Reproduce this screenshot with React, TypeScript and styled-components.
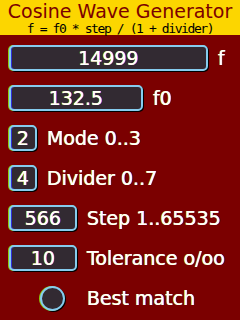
import styled, { createGlobalStyle } from "styled-components";

const GlobalStyle = createGlobalStyle`
    html, body {
        margin: 0;
        padding: 0;
        background: #7b0000;
    }
`;

const Screen = styled.div`
    width: 240px;
    height: 320px;
    background: #7b0000;
    font-family: "DejaVu Sans", sans-serif;
    overflow: hidden;
`;

const Header = styled.div`
    height: 35px;
    background: #fcd600;
    padding-top: 2px;
    box-sizing: border-box;
    display: flex;
    flex-direction: column;
    align-items: center;
    gap: 1px;
`;

const Title = styled.div`
    font-size: 19px;
    line-height: 19px;
    color: #7b0000;
    white-space: nowrap;
`;

const Formula = styled.div`
    font-family: "DejaVu Sans Mono", monospace;
    font-size: 13px;
    line-height: 13px;
    letter-spacing: -1.4px;
    color: #000;
    white-space: nowrap;
`;

const Body = styled.div`
    display: flex;
    flex-direction: column;
    gap: 14px;
    padding: 10px 0 0 9px;
`;

const Row = styled.div<{ $gap?: number }>`
    display: flex;
    align-items: center;
    gap: ${p => p.$gap ?? 10}px;
    height: 26px;
`;

const Field = styled.div<{ $w: number }>`
    width: ${p => p.$w}px;
    height: 26px;
    box-sizing: border-box;
    border: 2px solid #86ccee;
    border-radius: 5px;
    background: #322a32;
    box-shadow: -1px 0 0 #8ccc10, 1px 1px 0 #000, inset 1px 0 0 #3030d8;
    display: flex;
    align-items: center;
    justify-content: center;
    font-size: 19px;
    color: #fff;
    text-shadow: -0.6px 0 0 #ffe600, 0.6px 0 0 #2828ff;
`;

const Label = styled.span`
    font-size: 19px;
    color: #fff;
    white-space: nowrap;
    text-shadow: -0.6px 0 0 #ffe600, 0.6px 0 0 #2828ff;
`;

const Led = styled.div`
    width: 25px;
    height: 25px;
    margin-left: 31px;
    box-sizing: border-box;
    border-radius: 50%;
    border: 2px solid #86ccee;
    background: #322a32;
    box-shadow: -1px 0 0 #8ccc10, 1px 1px 0 #000;
`;

const fields = [
    { value: "14999", width: 199, label: "f" },
    { value: "132.5", width: 134, label: "f0" },
    { value: "2", width: 28, label: "Mode 0..3" },
    { value: "4", width: 28, label: "Divider 0..7" },
    { value: "566", width: 68, label: "Step 1..65535" },
    { value: "10", width: 68, label: "Tolerance o/oo" },
];

export default function App() {
    return (
        <Screen>
            <GlobalStyle />
            <Header>
                <Title>Cosine Wave Generator</Title>
                <Formula>f = f0 * step / (1 + divider)</Formula>
            </Header>
            <Body>
                {fields.map(f =>
                    <Row key={f.label}>
                        <Field $w={f.width}>{f.value}</Field>
                        <Label>{f.label}</Label>
                    </Row>)}
                <Row $gap={22}>
                    <Led />
                    <Label>Best match</Label>
                </Row>
            </Body>
        </Screen>
    );
}
